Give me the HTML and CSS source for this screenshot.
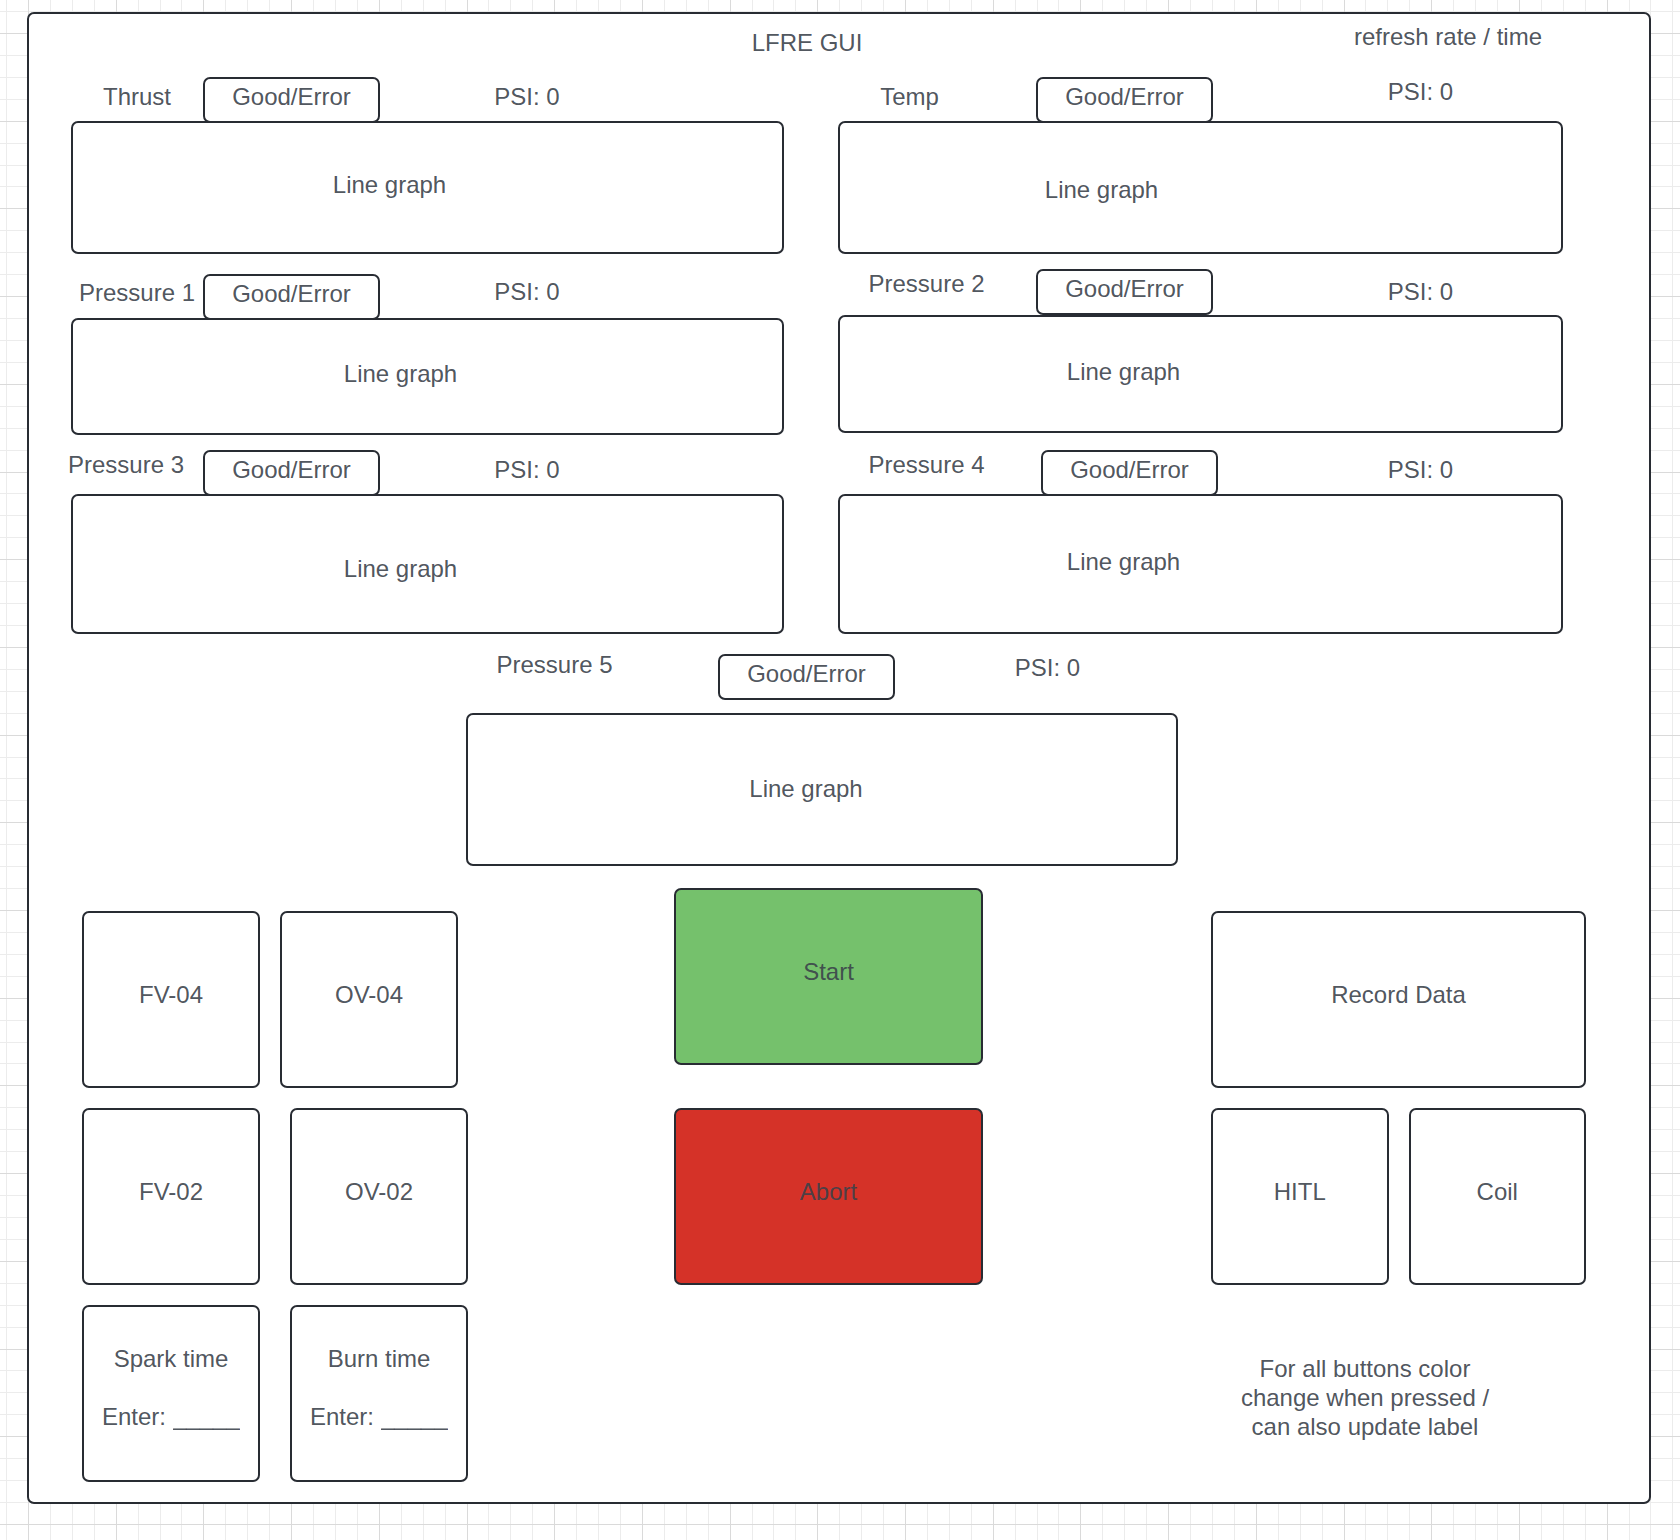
FILE: index.html
```html
<!DOCTYPE html>
<html lang="en">
<head>
  <meta charset="utf-8">
  <meta name="viewport" content="width=device-width, initial-scale=1">
  <title>LFRE GUI</title>
  <link rel="stylesheet" href="styles.css">
</head>
<body>
  <svg class="backdrop" aria-hidden="true">
    <defs>
      <pattern id="graph-paper" x="28" y="33" width="877" height="877" patternUnits="userSpaceOnUse">
        <path class="minor" d="M22.5 0V877M44.5 0V877M66.5 0V877M110.5 0V877M132.5 0V877M153.5 0V877M197.5 0V877M219.5 0V877M241.5 0V877M285.5 0V877M307.5 0V877M329.5 0V877M373.5 0V877M395.5 0V877M417.5 0V877M460.5 0V877M482.5 0V877M504.5 0V877M548.5 0V877M570.5 0V877M592.5 0V877M636.5 0V877M658.5 0V877M680.5 0V877M724.5 0V877M745.5 0V877M767.5 0V877M811.5 0V877M833.5 0V877M855.5 0V877"/>
        <path class="minor" d="M0 22.5H877M0 44.5H877M0 66.5H877M0 110.5H877M0 132.5H877M0 153.5H877M0 197.5H877M0 219.5H877M0 241.5H877M0 285.5H877M0 307.5H877M0 329.5H877M0 373.5H877M0 395.5H877M0 417.5H877M0 460.5H877M0 482.5H877M0 504.5H877M0 548.5H877M0 570.5H877M0 592.5H877M0 636.5H877M0 658.5H877M0 680.5H877M0 724.5H877M0 745.5H877M0 767.5H877M0 811.5H877M0 833.5H877M0 855.5H877"/>
        <path class="major" d="M.5 0V877M88.5 0V877M175.5 0V877M263.5 0V877M351.5 0V877M439.5 0V877M526.5 0V877M614.5 0V877M702.5 0V877M789.5 0V877"/>
        <path class="major" d="M0 .5H877M0 88.5H877M0 175.5H877M0 263.5H877M0 351.5H877M0 439.5H877M0 526.5H877M0 614.5H877M0 702.5H877M0 789.5H877"/>
      </pattern>
    </defs>
    <rect width="100%" height="100%" fill="url(#graph-paper)"/>
  </svg>

  <main class="panel">
    <header class="panel-header">
      <h1 class="title">LFRE GUI</h1>
      <p class="refresh">refresh rate / time</p>
    </header>

    <div class="channels">
      <div class="channel-column">
        <section class="channel thrust">
          <div class="channel-header">
            <h2 class="name">Thrust</h2>
            <span class="status">Good/Error</span>
            <p class="reading">PSI: 0</p>
          </div>
          <div class="graph">Line graph</div>
        </section>
        <section class="channel pressure-1">
          <div class="channel-header">
            <h2 class="name">Pressure 1</h2>
            <span class="status">Good/Error</span>
            <p class="reading">PSI: 0</p>
          </div>
          <div class="graph">Line graph</div>
        </section>
        <section class="channel pressure-3">
          <div class="channel-header">
            <h2 class="name">Pressure 3</h2>
            <span class="status">Good/Error</span>
            <p class="reading">PSI: 0</p>
          </div>
          <div class="graph">Line graph</div>
        </section>
      </div>

      <div class="channel-column right">
        <section class="channel temp">
          <div class="channel-header">
            <h2 class="name">Temp</h2>
            <span class="status">Good/Error</span>
            <p class="reading">PSI: 0</p>
          </div>
          <div class="graph">Line graph</div>
        </section>
        <section class="channel pressure-2">
          <div class="channel-header">
            <h2 class="name">Pressure 2</h2>
            <span class="status">Good/Error</span>
            <p class="reading">PSI: 0</p>
          </div>
          <div class="graph">Line graph</div>
        </section>
        <section class="channel pressure-4">
          <div class="channel-header">
            <h2 class="name">Pressure 4</h2>
            <span class="status">Good/Error</span>
            <p class="reading">PSI: 0</p>
          </div>
          <div class="graph">Line graph</div>
        </section>
      </div>
    </div>

    <div class="center-channel">
      <section class="channel pressure-5">
        <div class="channel-header">
          <h2 class="name">Pressure 5</h2>
          <span class="status">Good/Error</span>
          <p class="reading">PSI: 0</p>
        </div>
        <div class="graph">Line graph</div>
      </section>
    </div>

    <div class="controls">
      <div class="valves">
        <div class="tile-row upper">
          <button class="tile" type="button">FV-04</button>
          <button class="tile" type="button">OV-04</button>
        </div>
        <div class="tile-row">
          <button class="tile" type="button">FV-02</button>
          <button class="tile" type="button">OV-02</button>
        </div>
        <div class="tile-row">
          <div class="tile timer">
            <h2 class="timer-name">Spark time</h2>
            <div class="entry">
              <label for="spark-time">Enter:</label>
              <input class="entry-field" id="spark-time" type="text" placeholder="_____">
            </div>
          </div>
          <div class="tile timer">
            <h2 class="timer-name">Burn time</h2>
            <div class="entry">
              <label for="burn-time">Enter:</label>
              <input class="entry-field" id="burn-time" type="text" placeholder="_____">
            </div>
          </div>
        </div>
      </div>

      <div class="sequence">
        <button class="tile start" type="button">Start</button>
        <button class="tile abort" type="button">Abort</button>
      </div>

      <div class="recording">
        <button class="tile" type="button">Record Data</button>
        <div class="tile-row">
          <button class="tile" type="button">HITL</button>
          <button class="tile" type="button">Coil</button>
        </div>
        <p class="note">For all buttons color change when pressed / can also update label</p>
      </div>
    </div>
  </main>
</body>
</html>
```
FILE: styles.css
```css
:root {
  --ink: #3a414ae6;
  --line: #282c33;
}

* {
  box-sizing: border-box;
}

body {
  margin: 0;
  padding: 12px 29px 36px 27px;
  background: #fff;
  color: var(--ink);
  font: 24px/29px "Liberation Sans", Arial, sans-serif;
}

h1,
h2,
p {
  margin: 0;
  font: inherit;
}

button,
input {
  color: inherit;
  font: inherit;
}

/* Graph paper behind the panel */
.backdrop {
  position: fixed;
  inset: 0;
  z-index: -1;
  width: 100%;
  height: 100%;
  shape-rendering: crispEdges;
}

.minor {
  stroke: #ececec;
}

.major {
  stroke: #dadada;
}

.panel,
.status,
.graph,
.tile {
  border: 2px solid var(--line);
  border-radius: 7px;
  background: #fff;
}

.panel {
  padding-bottom: 20px;
}

.panel-header {
  display: grid;
  grid-template-columns: 600fr 356fr 326fr 274fr 64fr;
  min-height: 63px;
  text-align: center;
}

.title {
  grid-column: 2;
  padding-top: 14px;
}

.refresh {
  grid-column: 4;
  padding-top: 8px;
}

/* Sensor channels */
.channels {
  display: grid;
  grid-template-columns: 713fr 725fr;
  gap: 54px;
  padding: 0 86px 0 42px;
}

.channel-column {
  display: flex;
  flex-direction: column;
}

.channel-header {
  display: grid;
  grid-template-columns: 132fr 177px 0fr 294fr 110fr;
  align-items: start;
  margin-bottom: -2px;
  text-align: center;
}

.right .channel-header {
  grid-template-columns: 198fr 177px 65fr 285fr;
}

.name {
  padding-top: 5px;
  white-space: nowrap;
}

.status {
  height: 46px;
  padding-top: 3px;
  background: none;
}

.reading {
  grid-column: 4;
  padding-top: 5px;
}

.graph {
  display: flex;
  align-items: center;
  justify-content: center;
  min-height: 133px;
}

.thrust .graph {
  padding: 0 76px 6px 0;
}

.pressure-1 {
  margin-top: 20px;
}

.pressure-1 .name {
  padding-top: 4px;
}

.pressure-1 .reading {
  padding-top: 3px;
}

.pressure-1 .graph {
  min-height: 117px;
  padding: 0 54px 6px 0;
}

.pressure-3 {
  margin-top: 15px;
}

.pressure-3 .name {
  margin-left: -5px;
  padding: 0 17px 0 0;
}

.pressure-3 .graph {
  min-height: 140px;
  padding: 8px 54px 0 0;
}

.temp .name {
  padding-right: 55px;
}

.temp .reading {
  padding-top: 0;
}

.temp .graph {
  padding: 4px 198px 0 0;
}

.pressure-2 {
  margin-top: 15px;
}

.pressure-2 .channel-header {
  margin-bottom: 0;
}

.pressure-2 .name {
  padding: 0 21px 0 0;
}

.pressure-2 .reading {
  padding-top: 8px;
}

.pressure-2 .graph {
  min-height: 118px;
  padding: 0 154px 6px 0;
}

.pressure-4 {
  margin-top: 17px;
}

.pressure-4 .channel-header {
  grid-template-columns: 203fr 177px 60fr 285fr;
}

.pressure-4 .name {
  padding: 0 26px 0 0;
}

.pressure-4 .graph {
  min-height: 140px;
  padding: 0 154px 6px 0;
}

.center-channel {
  display: grid;
  grid-template-columns: 437fr 712fr 471fr;
  margin-top: 16px;
}

.pressure-5 {
  grid-column: 2;
}

.pressure-5 .channel-header {
  grid-template-columns: 252fr 177px 22fr 261fr;
  margin-bottom: 13px;
}

.pressure-5 .name {
  padding: 0 75px 0 0;
}

.pressure-5 .status {
  margin-top: 4px;
}

.pressure-5 .reading {
  padding-top: 3px;
}

.pressure-5 .graph {
  min-height: 153px;
  padding: 0 32px 3px 0;
}

/* Control buttons */
.controls {
  display: grid;
  grid-template-columns: 386fr 206fr 309fr 228fr 375fr;
  padding: 22px 63px 0 53px;
}

.valves,
.recording {
  display: flex;
  flex-direction: column;
  gap: 20px;
  padding-top: 23px;
}

.sequence {
  grid-column: 3;
  display: flex;
  flex-direction: column;
  gap: 43px;
}

.recording {
  grid-column: 5;
}

.tile-row {
  display: flex;
  gap: 20px;
}

.valves .tile-row {
  gap: 30px;
}

.valves .upper {
  gap: 20px;
  padding-right: 10px;
}

.tile {
  min-height: 177px;
  padding: 0 0 10px;
}

.tile-row .tile {
  flex: 1 1 0;
  min-width: 0;
}

.start {
  background: #75c16c;
}

.abort {
  background: #d53228;
}

.timer {
  display: flex;
  flex-direction: column;
  align-items: center;
  justify-content: center;
  gap: 29px;
  padding-bottom: 13px;
}

.entry {
  display: flex;
  gap: 7px;
}

.entry-field {
  width: 67px;
  height: 29px;
  padding: 0;
  border: 0;
  background: none;
}

.entry-field::placeholder {
  color: inherit;
  opacity: 1;
}

.note {
  width: 264px;
  margin: 49px 0 0 22px;
  text-align: center;
}
```
